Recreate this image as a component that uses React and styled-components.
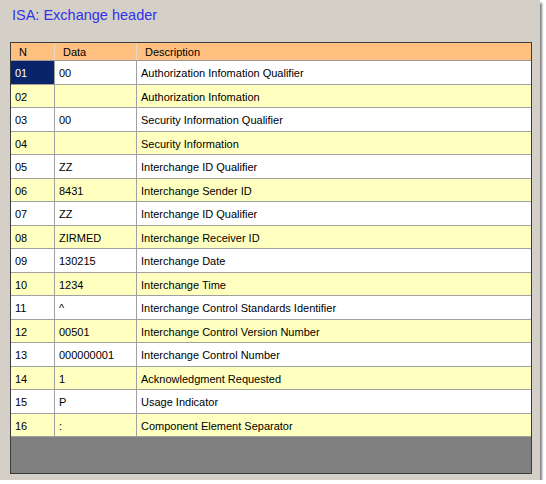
import React from "react";
import styled, { createGlobalStyle } from "styled-components";

const GlobalStyle = createGlobalStyle`
  body {
    margin: 0;
    background: #ffffff;
    font-family: "Liberation Sans", Arial, sans-serif;
  }
`;

const Window = styled.div`
  width: 540px;
  height: 480px;
  box-sizing: border-box;
  background: #d4d0c8;
  box-shadow: 2px 3px 2px rgba(0, 0, 0, .5);
  display: flex;
  flex-direction: column;
  padding: 6px 8px 6px 10px;
`;

const Title = styled.h1`
  margin: 0;
  height: 36px;
  padding-left: 2px;
  font-size: 14.5px;
  font-weight: 400;
  line-height: 18px;
  color: #3232e8;
`;

const Grid = styled.div`
  flex: 1;
  display: flex;
  flex-direction: column;
  border: 1px solid #3c3c3c;
  background: #808080;
  font-size: 11px;
  color: #000;
`;

const Row = styled.div`
  display: grid;
  grid-template-columns: 44px 82px 1fr;
  height: ${p => p.$h}px;
  box-sizing: border-box;
  border-bottom: 1px solid #a0a0a0;
  background: ${p => (p.$alt ? "#ffffc0" : "#ffffff")};
`;

const HeaderRow = styled(Row)`
  background: #ffc080;
  border-bottom: 1px solid #9a9a9a;
`;

const Cell = styled.div`
  display: flex;
  align-items: center;
  padding: ${p => (p.$head ? "0 0 0 8px" : "2px 0 0 4px")};
  white-space: nowrap;
  overflow: hidden;
  &:not(:last-child) {
    border-right: 1px solid ${p => (p.$head ? "#e8d8c8" : "#a0a0a0")};
  }
  ${p => p.$selected && `
    background: #0a246a;
    color: #ffffff;
  `}
`;

const rows = [
  ["01", "00", "Authorization Infomation Qualifier"],
  ["02", "", "Authorization Infomation"],
  ["03", "00", "Security Information Qualifier"],
  ["04", "", "Security Information"],
  ["05", "ZZ", "Interchange ID Qualifier"],
  ["06", "8431", "Interchange Sender ID"],
  ["07", "ZZ", "Interchange ID Qualifier"],
  ["08", "ZIRMED", "Interchange Receiver ID"],
  ["09", "130215", "Interchange Date"],
  ["10", "1234", "Interchange Time"],
  ["11", "^", "Interchange Control Standards Identifier"],
  ["12", "00501", "Interchange Control Version Number"],
  ["13", "000000001", "Interchange Control Number"],
  ["14", "1", "Acknowledgment Requested"],
  ["15", "P", "Usage Indicator"],
  ["16", ":", "Component Element Separator"]
];

const App = () => (
  <>
    <GlobalStyle />
    <Window>
      <Title>ISA: Exchange header</Title>
      <Grid>
        <HeaderRow $h={18}>
          <Cell $head>N</Cell>
          <Cell $head>Data</Cell>
          <Cell $head>Description</Cell>
        </HeaderRow>
        {rows.map(([n, data, desc], i) =>
          <Row key={n} $h={23.5} $alt={i % 2 === 1}>
            <Cell $selected={i === 0}>{n}</Cell>
            <Cell>{data}</Cell>
            <Cell>{desc}</Cell>
          </Row>
        )}
      </Grid>
    </Window>
  </>
);

export default App;
